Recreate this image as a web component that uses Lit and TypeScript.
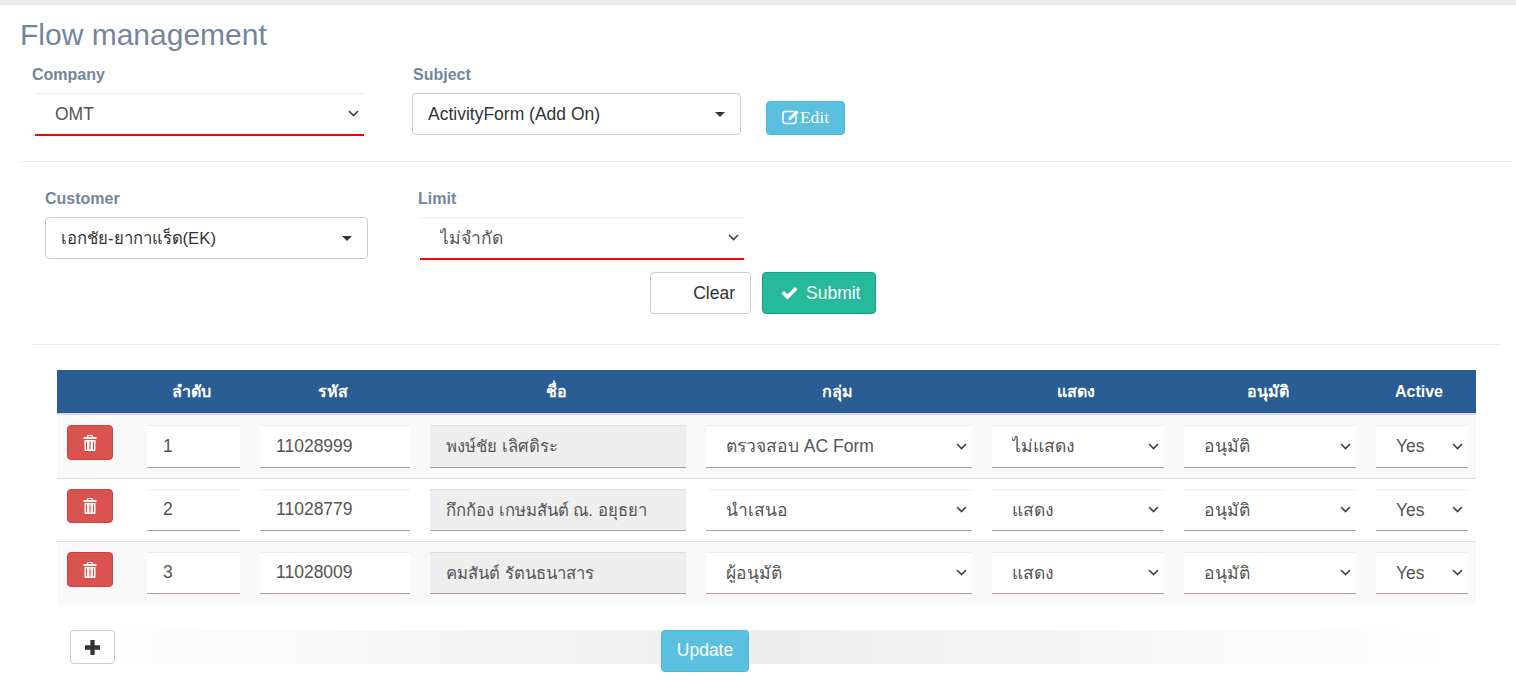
import { LitElement, css, html, svg } from 'lit';
import { customElement } from 'lit/decorators.js';

type Row = {
  no: string;
  code: string;
  name: string;
  group: string;
  show: string;
  approve: string;
  active: string;
};

const rows: Row[] = [
  { no: '1', code: '11028999', name: 'พงษ์ชัย เลิศดิระ', group: 'ตรวจสอบ AC Form', show: 'ไม่แสดง', approve: 'อนุมัติ', active: 'Yes' },
  { no: '2', code: '11028779', name: 'กึกก้อง เกษมสันต์ ณ. อยุธยา', group: 'นำเสนอ', show: 'แสดง', approve: 'อนุมัติ', active: 'Yes' },
  { no: '3', code: '11028009', name: 'คมสันต์ รัตนธนาสาร', group: 'ผู้อนุมัติ', show: 'แสดง', approve: 'อนุมัติ', active: 'Yes' },
];

const trashIcon = svg`<path fill-rule="evenodd" d="M4.500 0h5l.7 2h3.300v2H.5V2h3.300zM5.400 1.100l-.3.900h3.800l-.3-.9z M1.500 5h11v10c0 .6-.5 1-1 1H2.500c-.5 0-1-.4-1-1z M3 6.500V14.500h1.100V6.500z M6.400 6.500V14.500h1.200V6.500z M9.900 6.500V14.500H11V6.500z"/>`;

@customElement('app-root')
export class AppRoot extends LitElement {
  private caretSelect(value: string) {
    return html`
      <button class="caret-select" type="button">
        <span>${value}</span>
        <i class="caret"></i>
      </button>
    `;
  }

  private lineSelect(value: string) {
    return html`<select class="line-select"><option>${value}</option></select>`;
  }

  private renderRow(row: Row) {
    return html`
      <tr>
        <td>
          <button class="btn-trash" type="button">
            <svg width="14" height="16" viewBox="0 0 14 16" fill="currentColor">${trashIcon}</svg>
          </button>
        </td>
        <td><input class="cell-input" .value=${row.no} /></td>
        <td><input class="cell-input" .value=${row.code} /></td>
        <td><input class="cell-input name" disabled .value=${row.name} /></td>
        <td><select class="cell-select"><option>${row.group}</option></select></td>
        <td><select class="cell-select"><option>${row.show}</option></select></td>
        <td><select class="cell-select"><option>${row.approve}</option></select></td>
        <td class="last"><select class="cell-select"><option>${row.active}</option></select></td>
      </tr>
    `;
  }

  render() {
    return html`
      <div class="topbar"></div>
      <h3 class="title">Flow management</h3>

      <div class="form-row first">
        <div class="field company">
          <label>Company</label>
          ${this.lineSelect('OMT')}
        </div>
        <div class="field subject">
          <label>Subject</label>
          ${this.caretSelect('ActivityForm (Add On)')}
        </div>
        <button class="btn-edit" type="button">
          <svg width="18" height="16" viewBox="0 0 18 16" fill="none" stroke="currentColor">
            <rect x="1" y="2.500" width="13" height="12" rx="2.500" stroke-width="1.500" />
            <path d="M6 11.500l.7-3 7.800-7.500 2.500 2.500-7.800 7.500z" fill="currentColor" stroke="#5bc0de" stroke-width=".7" />
          </svg>Edit
        </button>
      </div>
      <hr class="rule-top" />

      <div class="form-row second">
        <div class="field customer">
          <label>Customer</label>
          ${this.caretSelect('เอกชัย-ยากาแร็ด(EK)')}
        </div>
        <div class="field limit">
          <label>Limit</label>
          ${this.lineSelect('ไม่จำกัด')}
        </div>
      </div>

      <div class="actions">
        <button class="btn-clear" type="button">Clear</button>
        <button class="btn-submit" type="button">
          <svg width="17" height="14" viewBox="0 0 17 14" fill="currentColor">
            <path d="M0.500 7.500l2.600-2.600 3.400 3.400 7.400-7.400 2.600 2.600-10 10z" />
          </svg>
          Submit
        </button>
      </div>
      <hr class="rule-bottom" />

      <table>
        <thead>
          <tr>
            <th></th>
            <th>ลำดับ</th>
            <th>รหัส</th>
            <th>ชื่อ</th>
            <th>กลุ่ม</th>
            <th>แสดง</th>
            <th>อนุมัติ</th>
            <th>Active</th>
          </tr>
        </thead>
        <tbody>${rows.map((row) => this.renderRow(row))}</tbody>
      </table>

      <div class="footer">
        <button class="btn-add" type="button">
          <svg width="15" height="15" viewBox="0 0 14 14" fill="currentColor">
            <path d="M5 0h4v5h5v4H9v5H5V9H0V5h5z" />
          </svg>
        </button>
        <button class="btn-update" type="button">Update</button>
      </div>
    `;
  }

  static styles = css`
    :host {
      display: block;
      height: 682px;
      overflow: hidden;
      background: #fff;
      font-family: 'Liberation Sans', 'Noto Sans', sans-serif;
      font-size: 17.5px;
      color: #333;
    }
    * {
      box-sizing: border-box;
    }
    .topbar {
      height: 5px;
      background: #ebebeb;
      border-bottom: 1px solid #dfe3e8;
    }
    .title {
      margin: 13px 0 0 20px;
      font-size: 30px;
      font-weight: 400;
      line-height: 33px;
      color: #73869c;
    }
    label {
      display: block;
      font-size: 16px;
      font-weight: 700;
      line-height: 18px;
      color: #73869c;
      margin-bottom: 9px;
    }
    .form-row {
      display: flex;
      align-items: flex-start;
    }
    .first {
      margin-top: 15px;
      padding-left: 32px;
    }
    .company {
      width: 380px;
    }
    .company .line-select {
      margin-left: 3px;
      width: 329px;
    }
    .subject {
      width: 329px;
      margin-right: 25px;
    }
    .subject label {
      padding-left: 1px;
    }
    .second {
      margin-top: 28px;
      padding-left: 45px;
    }
    .customer {
      width: 373px;
    }
    .limit .line-select {
      margin-left: 2px;
      width: 324px;
    }
    .customer .caret-select {
      width: 323px;
      font-size: 16.7px;
    }
    .line-select,
    .cell-select {
      appearance: none;
      background-image: url("data:image/svg+xml,%3Csvg xmlns='http://www.w3.org/2000/svg' width='11' height='7'%3E%3Cpath d='M1 1l4.500 4.500L10 1' fill='none' stroke='%23444' stroke-width='1.700'/%3E%3C/svg%3E");
      background-repeat: no-repeat;
      background-position: right 5px center;
    }
    .line-select {
      display: block;
      height: 43px;
      padding: 0 20px;
      border: 0;
      border-bottom: 2px solid #f00;
      border-radius: 0;
      background-color: #fff;
      box-shadow: inset 0 1px 1px rgba(0, 0, 0, 0.075);
      font: inherit;
      color: #555;
      outline: none;
    }
    .caret-select {
      display: flex;
      align-items: center;
      justify-content: space-between;
      width: 329px;
      height: 42px;
      padding: 0 15px;
      background: #fff;
      border: 1px solid #ccc;
      border-radius: 4px;
      font: inherit;
      color: #333;
    }
    .caret {
      width: 0;
      height: 0;
      border-top: 5px solid #333;
      border-left: 5px solid transparent;
      border-right: 5px solid transparent;
    }
    .btn-edit {
      display: flex;
      align-items: center;
      justify-content: center;
      width: 79px;
      height: 34px;
      margin-top: 35px;
      padding: 0 0 2px;
      background: #5bc0de;
      border: 1px solid #46b8da;
      border-radius: 4px;
      color: #fff;
      font-family: 'Liberation Serif', serif;
      font-size: 17.5px;
    }
    hr {
      height: 1px;
      border: 0;
      background: #eee;
      margin: 0;
    }
    .rule-top {
      margin: 25px 4px 0 20px;
    }
    .rule-bottom {
      margin: 30px 15px 0 32px;
    }
    .actions {
      display: flex;
      gap: 11px;
      margin: 12px 0 0 650px;
    }
    .btn-clear,
    .btn-submit {
      height: 42px;
      border-radius: 4px;
      font: inherit;
    }
    .btn-clear {
      width: 101px;
      padding: 0 15px;
      text-align: right;
      background: #fff;
      border: 1px solid #ccc;
      color: #333;
    }
    .btn-submit {
      display: flex;
      align-items: center;
      gap: 8px;
      width: 114px;
      padding: 0 0 0 18px;
      background: #26b99a;
      border: 1px solid #169f85;
      color: #fff;
    }
    table {
      width: 1419px;
      margin: 25px 0 0 57px;
      border-collapse: separate;
      border-spacing: 0;
      table-layout: fixed;
    }
    th:nth-child(1) { width: 80px; }
    th:nth-child(2) { width: 113px; }
    th:nth-child(3) { width: 170px; }
    th:nth-child(4) { width: 276px; }
    th:nth-child(5) { width: 286px; }
    th:nth-child(6) { width: 192px; }
    th:nth-child(7) { width: 192px; }
    th:nth-child(8) { width: 110px; }
    th {
      height: 45px;
      padding: 0 4px 0 0;
      background: #2a5d94;
      border-bottom: 2px solid #ddd;
      color: #fff;
      font-size: 16px;
      font-weight: 700;
      text-align: center;
    }
    td {
      padding: 10px;
      height: 63px;
      background: #fff;
      border-bottom: 1px solid #ddd;
      vertical-align: top;
    }
    tr:nth-child(odd) td {
      background: #f9f9f9;
    }
    td.last {
      padding-right: 8px;
    }
    tr:last-child td {
      border-bottom: 0;
    }
    .cell-input,
    .cell-select {
      display: block;
      width: 100%;
      height: 42px;
      border: 0;
      border-bottom: 1px solid #b49a9a;
      border-radius: 0;
      background-color: #fff;
      box-shadow: inset 0 1px 1px rgba(0, 0, 0, 0.075);
      font: inherit;
      color: #555;
      outline: none;
    }
    tr:first-child .cell-input,
    tr:first-child .cell-select {
      height: 43px;
    }
    .cell-input {
      padding: 0 16px;
    }
    .cell-input.name {
      font-size: 16.7px;
    }
    .cell-select {
      padding: 0 20px;
    }
    .cell-input:disabled {
      background: #eee;
    }
    .btn-trash {
      display: flex;
      align-items: center;
      justify-content: center;
      width: 46px;
      height: 35px;
      padding: 0;
      background: #d9534f;
      border: 1px solid #d43f3a;
      border-radius: 4px;
      color: #fff;
    }
    tr:nth-child(2) .btn-trash {
      height: 34px;
    }
    .footer {
      display: flex;
      align-items: flex-start;
      width: 1380px;
      height: 34px;
      margin: 25px 0 0 70px;
      background: linear-gradient(to right, #fff, #eee, #fff);
    }
    .btn-add {
      display: flex;
      align-items: center;
      justify-content: center;
      width: 45px;
      height: 34px;
      padding: 0;
      background: #fff;
      border: 1px solid #ccc;
      border-radius: 4px;
      color: #333;
    }
    .btn-update {
      flex: none;
      width: 88px;
      height: 42px;
      margin-left: 546px;
      padding: 0 0 2px;
      background: #5bc0de;
      border: 1px solid #46b8da;
      border-radius: 4px;
      color: #fff;
      font: inherit;
    }
  `;
}
